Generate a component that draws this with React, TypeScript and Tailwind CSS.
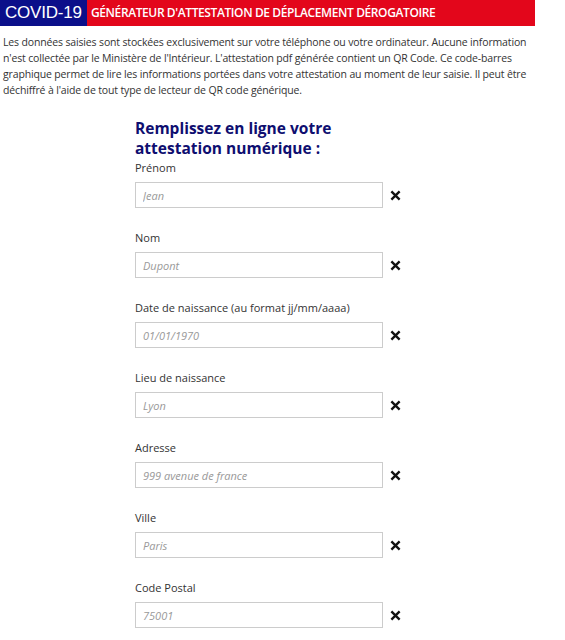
const fields = [
  { label: "Prénom", placeholder: "Jean" },
  { label: "Nom", placeholder: "Dupont" },
  { label: "Date de naissance (au format jj/mm/aaaa)", placeholder: "01/01/1970" },
  { label: "Lieu de naissance", placeholder: "Lyon" },
  { label: "Adresse", placeholder: "999 avenue de france" },
  { label: "Ville", placeholder: "Paris" },
  { label: "Code Postal", placeholder: "75001" },
];

function ClearIcon() {
  return (
    <svg width="11" height="11" viewBox="0 0 12 12" className="shrink-0">
      <path d="M1.5 1.5 L10.5 10.5 M10.5 1.5 L1.5 10.5" stroke="#111" strokeWidth="2.6" strokeLinecap="butt" />
    </svg>
  );
}

export default function App() {
  return (
    <div className="w-[565px] min-h-[640px] bg-white font-['Open_Sans','Noto_Sans',sans-serif] text-[#333]">
      {/* bandeau */}
      <header className="flex w-[535px] h-[26px]">
        <div className="bg-[#0b0f8a] text-white text-[17px] leading-[26px] pl-[5px] w-[87px] whitespace-nowrap tracking-[-0.2px] font-['Liberation_Sans',sans-serif]">
          COVID-19
        </div>
        <div className="flex-1 bg-[#e3061b] text-white text-[12px] font-semibold leading-[26px] pl-[4px] tracking-[-0.4px] whitespace-nowrap">
          GÉNÉRATEUR D'ATTESTATION DE DÉPLACEMENT DÉROGATOIRE
        </div>
      </header>

      <p className="px-[3px] pt-[8px] w-[530px] text-[10.5px] leading-[16px] tracking-[-0.15px]">
        Les données saisies sont stockées exclusivement sur votre téléphone ou votre ordinateur. Aucune information
        n'est collectée par le Ministère de l'Intérieur. L'attestation pdf générée contient un QR Code. Ce code-barres
        graphique permet de lire les informations portées dans votre attestation au moment de leur saisie. Il peut être
        déchiffré à l'aide de tout type de lecteur de QR code générique.
      </p>

      <form className="ml-[135px] w-[275px] pt-[20px]">
        <h2 className="text-[#0e0e70] font-bold text-[15.5px] leading-[20px] w-[210px]">
          Remplissez en ligne votre attestation numérique :
        </h2>
        <div className="flex flex-col mt-[2px]">
          {fields.map((f, i) => (
            <div key={i} className="h-[70px]">
              <label className="block text-[11px] leading-[16px]">{f.label}</label>
              <div className="flex items-center gap-[7px] mt-[6px]">
                <input
                  placeholder={f.placeholder}
                  className="w-[248px] h-[26px] border border-[#ccc] px-[7px] text-[11px] italic placeholder:text-[#999] outline-none"
                />
                <ClearIcon />
              </div>
            </div>
          ))}
        </div>
      </form>
    </div>
  );
}
